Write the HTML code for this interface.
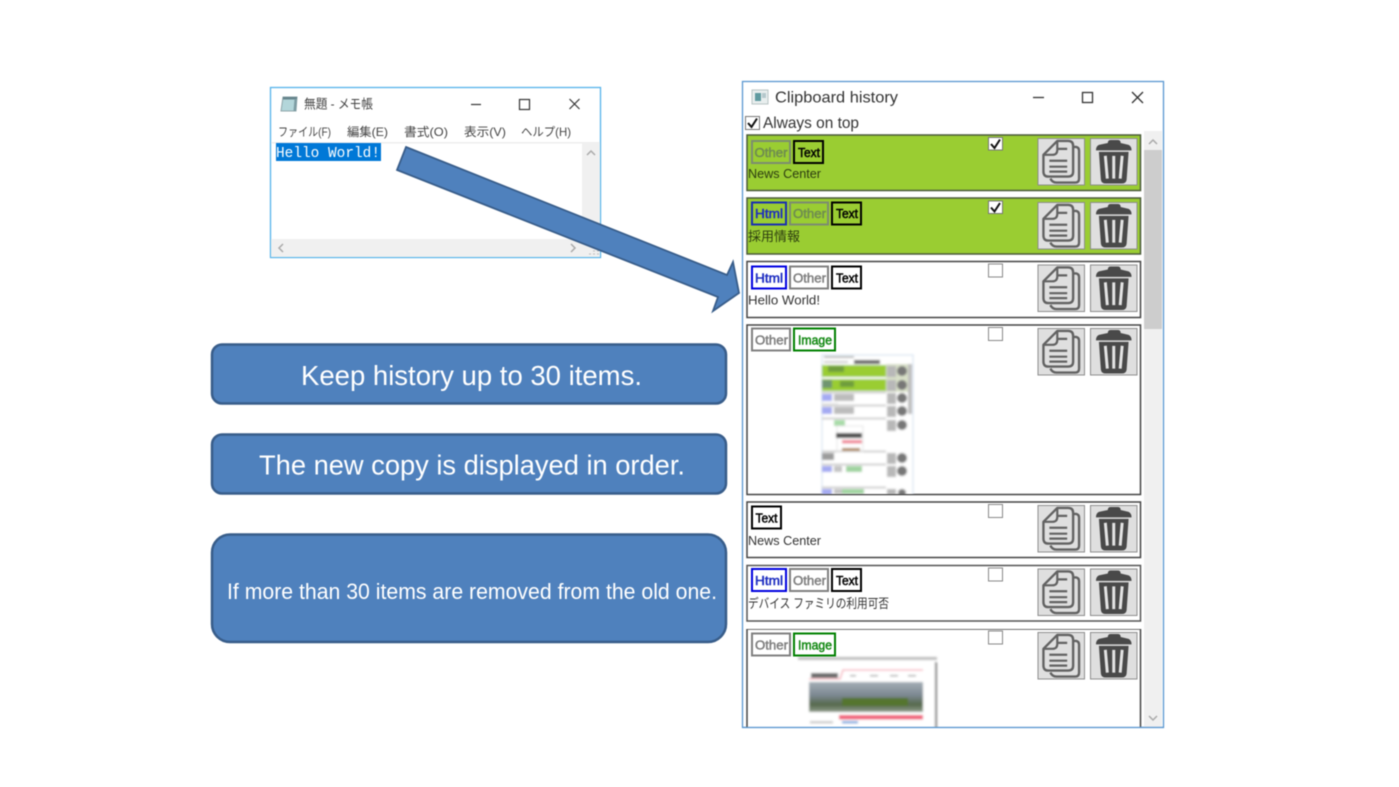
<!DOCTYPE html>
<html lang="en">
<head>
<meta charset="utf-8">
<title>Clipboard history</title>
<style>
html,body{margin:0;padding:0;background:#fff;width:1399px;height:787px;overflow:hidden}
svg{display:block;filter:blur(.45px)}
text{font-family:"Liberation Sans","Noto Sans CJK JP",sans-serif}
.tag{font-size:12.5px;font-weight:normal;stroke-width:.5px}
.k{fill:#000;stroke:#000}
.b{fill:#1c2cc0;stroke:#1c2cc0}
.g{fill:#808080;stroke:#808080}
.gg{fill:#6f8c50;stroke:#6f8c50}
.n{fill:#158a15;stroke:#158a15}
.lbl{font-size:13px;fill:#333}
.big{fill:#fff;font-size:28px}
.m{font-size:12px;fill:#444}
</style>
</head>
<body>
<svg width="1399" height="787" viewBox="0 0 1399 787" xmlns="http://www.w3.org/2000/svg">
<defs>
<filter id="b1" x="-5%" y="-5%" width="110%" height="110%"><feGaussianBlur stdDeviation="1.100"/></filter>
<linearGradient id="city" x1="0" y1="0" x2="0" y2="1"><stop offset="0" stop-color="#a4aeb6"/><stop offset=".45" stop-color="#7b8790"/><stop offset=".75" stop-color="#56694c"/><stop offset="1" stop-color="#8f9c8c"/></linearGradient>
<clipPath id="c4"><rect x="748" y="326" width="392" height="168"/></clipPath>
<clipPath id="c7"><rect x="744" y="629" width="398" height="98"/></clipPath>
<symbol id="copy" viewBox="0 0 48 48" overflow="visible">
<rect x=".5" y=".5" width="47" height="47" fill="#dfdfdf" stroke="#8c8c8c"/>
<path d="M36 9 L39 9 Q42 9.500 42 13 V41 Q42 45 38 45 H19 Q15 45 13 41" fill="none" stroke="#626262" stroke-width="2.400"/>
<path d="M20 3 H31 Q36 3 36 8 V34 Q36 39 31 39 H11 Q6 39 6 34 V17 Z" fill="#dfdfdf" stroke="#626262" stroke-width="2.400" stroke-linejoin="round"/>
<path d="M20 3 V12 Q20 17 15 17 H6" fill="none" stroke="#626262" stroke-width="2.200"/>
<path d="M20 11 H30 M12 23 H30 M12 29 H30 M12 34 H30" fill="none" stroke="#626262" stroke-width="2.200"/>
</symbol>
<symbol id="trash" viewBox="0 0 48 48" overflow="visible">
<rect x=".5" y=".5" width="47" height="47" fill="#dfdfdf" stroke="#8c8c8c"/>
<path d="M18 5 Q18 2 21 2 H28 Q31 2 31 5 L39 7 Q42 8.500 42 12.500 H6 Q6 8.500 9 7 Z" fill="#494949"/>
<path d="M9 14 H39 L37 42 Q36.500 46 32 46 H16 Q11.500 46 11 42 Z" fill="#494949"/>
<path d="M15.500 18 L17.500 41 M24 18 V41 M32.500 18 L30.500 41" stroke="#e4e4e4" stroke-width="3" fill="none"/>
</symbol>
</defs>

<rect width="1399" height="787" fill="#fff"/>

<!-- Notepad window -->
<rect x="270.500" y="87.500" width="330" height="170" fill="#fff" stroke="#55b3ea" stroke-width="1.300"/>
<path d="M283 97 H297 L296 111 H281 Z" fill="#b3d6da" stroke="#8fa6aa" stroke-width="1"/>
<path d="M283 97 H297 V99.500 H282.700 Z" fill="#66848c"/>
<path d="M294.500 99 H297 L296 111 H293.500 Z" fill="#7d9ca3"/>
<text x="304" y="108.500" font-size="13" fill="#444" textLength="69" lengthAdjust="spacingAndGlyphs">無題 - メモ帳</text>
<path d="M471 104.500 H481" stroke="#333" stroke-width="1.200"/>
<rect x="519.500" y="99.500" width="10" height="10" fill="none" stroke="#333" stroke-width="1.200"/>
<path d="M569.500 99 L579.500 109 M579.500 99 L569.500 109" stroke="#333" stroke-width="1.200"/>
<text class="m" x="278" y="136" textLength="53" lengthAdjust="spacingAndGlyphs">ファイル(F)</text>
<text class="m" x="347" y="136" textLength="41" lengthAdjust="spacingAndGlyphs">編集(E)</text>
<text class="m" x="404" y="136" textLength="44" lengthAdjust="spacingAndGlyphs">書式(O)</text>
<text class="m" x="464" y="136" textLength="42" lengthAdjust="spacingAndGlyphs">表示(V)</text>
<text class="m" x="521" y="136" textLength="50" lengthAdjust="spacingAndGlyphs">ヘルプ(H)</text>
<rect x="271" y="142" width="329" height="1.500" fill="#eee"/>
<rect x="582" y="143" width="18" height="96" fill="#f0f0f0"/>
<rect x="271" y="239" width="329" height="18" fill="#f0f0f0"/>
<path d="M587 155 L591 151 L595 155" fill="none" stroke="#aaa" stroke-width="1.500"/>
<path d="M283 244 L279 248 L283 252" fill="none" stroke="#aaa" stroke-width="1.500"/>
<path d="M571 244 L575 248 L571 252" fill="none" stroke="#aaa" stroke-width="1.500"/>
<path d="M589 254 h2 M593 254 h2 M597 254 h2 M593 251 h2 M597 251 h2" stroke="#bbb" stroke-width="1"/>
<rect x="276" y="143" width="105" height="18" fill="#0078d7"/>
<text x="276" y="157" font-size="15" fill="#fff" style="font-family:'Liberation Mono',monospace" textLength="104" lengthAdjust="spacingAndGlyphs">Hello World!</text>

<!-- Blue boxes -->
<rect x="212" y="344.500" width="514" height="59" rx="10" fill="#4f81bd" stroke="#385d8a" stroke-width="2.500"/>
<rect x="212" y="434.500" width="514" height="59" rx="10" fill="#4f81bd" stroke="#385d8a" stroke-width="2.500"/>
<rect x="212" y="534.500" width="514" height="107.500" rx="18" fill="#4f81bd" stroke="#385d8a" stroke-width="2.500"/>
<text class="big" x="301" y="385" textLength="341" lengthAdjust="spacingAndGlyphs">Keep history up to 30 items.</text>
<text class="big" x="259" y="474.500" textLength="426" lengthAdjust="spacingAndGlyphs">The new copy is displayed in order.</text>
<text x="227" y="599" font-size="22" fill="#fff" textLength="490" lengthAdjust="spacingAndGlyphs">If more than 30 items are removed from the old one.</text>

<!-- Clipboard window -->
<rect x="742.500" y="81.500" width="421" height="646" fill="#fff" stroke="#5a97d0" stroke-width="1.300"/>
<rect x="752" y="90" width="16" height="14" fill="#e8eeee" stroke="#b8c4c4"/>
<rect x="755" y="93" width="6" height="8" fill="#5f9aa0"/>
<rect x="762" y="93" width="4" height="5" fill="#b5c8cc"/>
<text x="775" y="102.500" font-size="16" fill="#333" textLength="123" lengthAdjust="spacingAndGlyphs">Clipboard history</text>
<path d="M1033 97.500 H1044" stroke="#333" stroke-width="1.300"/>
<rect x="1082.500" y="92.500" width="10" height="10" fill="none" stroke="#333" stroke-width="1.300"/>
<path d="M1132 92 L1143 103 M1143 92 L1132 103" stroke="#333" stroke-width="1.300"/>
<rect x="745.500" y="116.500" width="14" height="13" fill="#fff" stroke="#777"/>
<path d="M748 123 L751.500 127 L757 118.500" fill="none" stroke="#111" stroke-width="2"/>
<text x="763" y="128" font-size="16" fill="#333" textLength="96" lengthAdjust="spacingAndGlyphs">Always on top</text>

<!-- Scrollbar -->
<rect x="1144" y="131" width="18" height="596" fill="#f0f0f0"/>
<rect x="1144" y="150" width="18" height="179" fill="#cdcdcd"/>
<path d="M1149 144 L1153 140 L1157 144" fill="none" stroke="#aaa" stroke-width="1.500"/>
<path d="M1149 716 L1153 720 L1157 716" fill="none" stroke="#aaa" stroke-width="1.500"/>

<!-- Item 1 -->
<rect x="747" y="135" width="393.500" height="55.500" fill="#9acd32" stroke="#4a5a3a" stroke-width="1.500"/>
<rect x="752" y="141" width="38" height="22" fill="none" stroke="#7c8c70" stroke-width="2"/>
<text class="tag gg" x="754.500" y="157" textLength="33" lengthAdjust="spacingAndGlyphs">Other</text>
<rect x="794" y="141" width="29" height="22" fill="none" stroke="#000" stroke-width="2"/>
<text class="tag k" x="798" y="157" textLength="22" lengthAdjust="spacingAndGlyphs">Text</text>
<text class="lbl" x="748" y="178" style="fill:#2c3c10" textLength="73" lengthAdjust="spacingAndGlyphs">News Center</text>
<rect x="988.500" y="137.500" width="14" height="12.500" fill="#fff" stroke="#777"/>
<path d="M991 144 L994.500 148 L1000 139.500" fill="none" stroke="#111" stroke-width="2"/>
<use href="#copy" x="1037.500" y="138" width="47.500" height="47.500"/>
<use href="#trash" x="1090" y="138" width="47.500" height="47.500"/>

<!-- Item 2 -->
<rect x="747" y="198" width="393.500" height="56" fill="#9acd32" stroke="#4a5a3a" stroke-width="1.500"/>
<rect x="752" y="202.500" width="34" height="22" fill="none" stroke="#1a2fb0" stroke-width="2"/>
<text class="tag b" x="755" y="218" textLength="28" lengthAdjust="spacingAndGlyphs">Html</text>
<rect x="790" y="202.500" width="38" height="22" fill="none" stroke="#7c8c70" stroke-width="2"/>
<text class="tag gg" x="793" y="218" textLength="33" lengthAdjust="spacingAndGlyphs">Other</text>
<rect x="832" y="202.500" width="29" height="22" fill="none" stroke="#000" stroke-width="2"/>
<text class="tag k" x="836" y="218" textLength="22" lengthAdjust="spacingAndGlyphs">Text</text>
<text class="lbl" x="748" y="241" style="fill:#2c3c10" textLength="52" lengthAdjust="spacingAndGlyphs">採用情報</text>
<rect x="988.500" y="201" width="14" height="12.500" fill="#fff" stroke="#777"/>
<path d="M991 207.500 L994.500 211.500 L1000 203" fill="none" stroke="#111" stroke-width="2"/>
<use href="#copy" x="1037.500" y="202" width="47.500" height="47.500"/>
<use href="#trash" x="1090" y="202" width="47.500" height="47.500"/>

<!-- Item 3 -->
<rect x="747" y="261.500" width="393.500" height="56" fill="#fff" stroke="#444" stroke-width="1.500"/>
<rect x="752" y="266.500" width="34" height="22" fill="none" stroke="#0000e0" stroke-width="2"/>
<text class="tag b" x="755" y="282.500" textLength="28" lengthAdjust="spacingAndGlyphs">Html</text>
<rect x="790" y="266.500" width="38" height="22" fill="none" stroke="#808080" stroke-width="2"/>
<text class="tag g" x="793" y="282.500" textLength="33" lengthAdjust="spacingAndGlyphs">Other</text>
<rect x="832" y="266.500" width="29" height="22" fill="none" stroke="#000" stroke-width="2"/>
<text class="tag k" x="836" y="282.500" textLength="22" lengthAdjust="spacingAndGlyphs">Text</text>
<text class="lbl" x="748" y="304.500" textLength="72" lengthAdjust="spacingAndGlyphs">Hello World!</text>
<rect x="988.500" y="264" width="14" height="13" fill="#fff" stroke="#888"/>
<use href="#copy" x="1037.500" y="264.500" width="47.500" height="47.500"/>
<use href="#trash" x="1090" y="264.500" width="47.500" height="47.500"/>

<!-- Item 4 -->
<rect x="747" y="325" width="393.500" height="169.500" fill="#fff" stroke="#444" stroke-width="1.500"/>
<rect x="752" y="328.500" width="38" height="22" fill="none" stroke="#808080" stroke-width="2"/>
<text class="tag g" x="755" y="344.500" textLength="33" lengthAdjust="spacingAndGlyphs">Other</text>
<rect x="794" y="328.500" width="41" height="22" fill="none" stroke="#008000" stroke-width="2"/>
<text class="tag n" x="798" y="344.500" textLength="34" lengthAdjust="spacingAndGlyphs">Image</text>
<g clip-path="url(#c4)">
<g filter="url(#b1)">
<rect x="822" y="355" width="91" height="145" fill="#fff" stroke="#cfdff0"/>
<rect x="824" y="356" width="30" height="2" fill="#bbb"/>
<rect x="824" y="361" width="24" height="2" fill="#ccc"/>
<rect x="854" y="360" width="26" height="4" fill="#666"/>
<rect x="822" y="365" width="64" height="12" fill="#9acd32"/>
<rect x="822" y="379" width="64" height="12" fill="#9acd32"/>
<rect x="886" y="364" width="24" height="28" fill="#d8e0c8"/>
<rect x="828" y="366" width="16" height="6" fill="#6f9e3c"/>
<rect x="822" y="380" width="10" height="8" fill="#6f9570"/>
<rect x="840" y="381" width="14" height="6" fill="#6f9e3c"/>
<g fill="#cfcfcf"><rect x="822" y="391.500" width="64" height="2"/><rect x="822" y="404.500" width="64" height="2"/><rect x="822" y="417.500" width="64" height="2"/><rect x="822" y="450.500" width="64" height="2"/><rect x="822" y="463.500" width="64" height="2"/><rect x="822" y="486.500" width="64" height="2"/></g>
<rect x="822" y="394" width="10" height="7" fill="#a4aaf2"/>
<rect x="834" y="394" width="20" height="7" fill="#bcbcbc"/>
<rect x="822" y="407" width="10" height="7" fill="#a4aaf2"/>
<rect x="834" y="407" width="20" height="7" fill="#bcbcbc"/>
<rect x="822" y="403" width="16" height="1" fill="#ddd"/>
<rect x="834" y="420" width="11" height="6" fill="#a8dca8"/>
<rect x="837" y="426" width="26" height="26" fill="none" stroke="#e4e4e4"/>
<rect x="836" y="433" width="26" height="5" fill="#4d4d4d"/>
<rect x="842" y="440" width="20" height="3.500" fill="#f08a9a"/>
<rect x="842" y="448" width="18" height="3" fill="#b08a60"/>
<rect x="822" y="453" width="12" height="7" fill="#9c9c9c"/>
<rect x="822" y="466" width="10" height="6" fill="#a4aaf2"/>
<rect x="834" y="466" width="8" height="6" fill="#c4c4c4"/>
<rect x="846" y="466" width="16" height="6" fill="#a0d4a0"/>
<rect x="822" y="489" width="10" height="6" fill="#a4aaf2"/>
<rect x="834" y="489" width="8" height="5" fill="#c4c4c4"/>
<rect x="842" y="489" width="22" height="5" fill="#a0d4a0"/>
<g fill="#b8b8b8"><rect x="887" y="366" width="9" height="11"/><rect x="887" y="380" width="9" height="11"/><rect x="887" y="393" width="9" height="11"/><rect x="887" y="406" width="9" height="11"/><rect x="887" y="420" width="9" height="11"/><rect x="887" y="453" width="9" height="11"/><rect x="887" y="466" width="9" height="11"/><rect x="887" y="489" width="9" height="6"/></g>
<g fill="#777"><circle cx="902" cy="371" r="5"/><circle cx="902" cy="385" r="5"/><circle cx="902" cy="398" r="5"/><circle cx="902" cy="411" r="5"/><circle cx="902" cy="425" r="5"/><circle cx="902" cy="458" r="5"/><circle cx="902" cy="471" r="5"/><circle cx="902" cy="493" r="4"/></g>
<rect x="908" y="364" width="4" height="50" fill="#bdbdbd"/>
</g>
</g>
<rect x="988.500" y="327.500" width="14" height="13" fill="#fff" stroke="#888"/>
<use href="#copy" x="1037.500" y="328" width="47.500" height="47.500"/>
<use href="#trash" x="1090" y="328" width="47.500" height="47.500"/>

<!-- Item 5 -->
<rect x="747" y="502" width="393.500" height="55.500" fill="#fff" stroke="#444" stroke-width="1.500"/>
<rect x="752" y="506.500" width="29" height="22" fill="none" stroke="#000" stroke-width="2"/>
<text class="tag k" x="755.500" y="522.500" textLength="22" lengthAdjust="spacingAndGlyphs">Text</text>
<text class="lbl" x="748" y="545" textLength="73" lengthAdjust="spacingAndGlyphs">News Center</text>
<rect x="988.500" y="504.500" width="14" height="13" fill="#fff" stroke="#888"/>
<use href="#copy" x="1037.500" y="505" width="47.500" height="47.500"/>
<use href="#trash" x="1090" y="505" width="47.500" height="47.500"/>

<!-- Item 6 -->
<rect x="747" y="565.500" width="393.500" height="55.500" fill="#fff" stroke="#555" stroke-width="1.500"/>
<rect x="752" y="569" width="34" height="22" fill="none" stroke="#0000e0" stroke-width="2"/>
<text class="tag b" x="755" y="585" textLength="28" lengthAdjust="spacingAndGlyphs">Html</text>
<rect x="790" y="569" width="38" height="22" fill="none" stroke="#808080" stroke-width="2"/>
<text class="tag g" x="793" y="585" textLength="33" lengthAdjust="spacingAndGlyphs">Other</text>
<rect x="832" y="569" width="29" height="22" fill="none" stroke="#000" stroke-width="2"/>
<text class="tag k" x="836" y="585" textLength="22" lengthAdjust="spacingAndGlyphs">Text</text>
<text class="lbl" x="748" y="608" textLength="141" lengthAdjust="spacingAndGlyphs">デバイス ファミリの利用可否</text>
<rect x="988.500" y="568" width="14" height="13" fill="#fff" stroke="#888"/>
<use href="#copy" x="1037.500" y="568.500" width="47.500" height="47.500"/>
<use href="#trash" x="1090" y="568.500" width="47.500" height="47.500"/>

<!-- Item 7 -->
<g clip-path="url(#c7)">
<rect x="747" y="629" width="393.500" height="120" fill="#fff" stroke="#444" stroke-width="1.500"/>
<g filter="url(#b1)">
<rect x="798" y="658" width="139" height="75" fill="#fff"/>
<rect x="798" y="657" width="139" height="3" fill="#bdbdbd"/>
<rect x="935" y="662" width="2" height="70" fill="#777"/>
<path d="M809 679 H840 L843 670 H923" fill="none" stroke="#f5a8b4" stroke-width="1.300"/>
<rect x="811" y="673" width="27" height="5" fill="#6a6a6a"/>
<rect x="850" y="675" width="6" height="1.500" fill="#aaa"/>
<rect x="870" y="675" width="8" height="1.500" fill="#aaa"/>
<rect x="890" y="675" width="8" height="1.500" fill="#aaa"/>
<rect x="908" y="675" width="8" height="1.500" fill="#aaa"/>
<rect x="809" y="682" width="114" height="30" fill="url(#city)"/>
<rect x="842" y="698" width="66" height="8" fill="#55752f"/>
<rect x="839" y="715" width="84" height="4.500" fill="#f0607a"/>
<rect x="810" y="721" width="23" height="2.500" fill="#ccc"/>
<rect x="842" y="721" width="16" height="2.500" fill="#7aa8e0"/>
</g>
</g>
<rect x="752" y="633.500" width="38" height="22" fill="none" stroke="#808080" stroke-width="2"/>
<text class="tag g" x="755" y="649.500" textLength="33" lengthAdjust="spacingAndGlyphs">Other</text>
<rect x="794" y="633.500" width="41" height="22" fill="none" stroke="#008000" stroke-width="2"/>
<text class="tag n" x="798" y="649.500" textLength="34" lengthAdjust="spacingAndGlyphs">Image</text>
<rect x="988.500" y="631" width="14" height="13" fill="#fff" stroke="#888"/>
<use href="#copy" x="1037.500" y="632" width="47.500" height="47.500"/>
<use href="#trash" x="1090" y="632" width="47.500" height="47.500"/>
<rect x="743" y="726.800" width="420" height="1.200" fill="#5a97d0"/>

<!-- Arrow -->
<path d="M406 147 L727 275 L733 262 L739 293 L713 311 L718 297 L397 170 Z" fill="#4f81bd" stroke="#385d8a" stroke-width="1.800" stroke-linejoin="miter"/>
</svg>
</body>
</html>
